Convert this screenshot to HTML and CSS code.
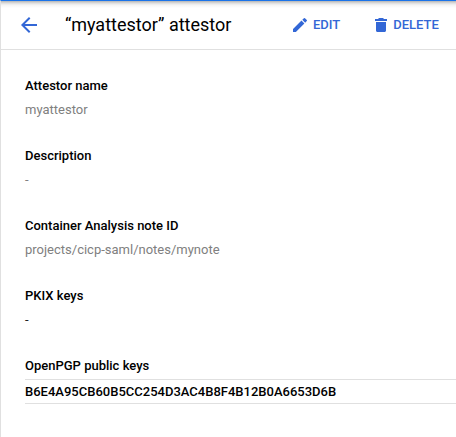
FILE: index.html
```html
<!DOCTYPE html>
<html lang="en">
<head>
<meta charset="utf-8">
<title>“myattestor” attestor</title>
<link rel="stylesheet" href="styles.css">
</head>
<body>
<header class="toolbar">
  <svg class="back" viewBox="0 0 24 24"><path d="M20 11H7.83l5.59-5.59L12 4l-8 8 8 8 1.41-1.41L7.83 13H20v-2z"/></svg>
  <h1 class="title">“myattestor” attestor</h1>
  <button class="action edit"><svg viewBox="0 0 18 18"><path d="M2 13.120V16h2.880l8.500-8.500-2.880-2.880L2 13.120zM15.780 5.100a.77.77 0 0 0 0-1.080l-1.800-1.800a.77.77 0 0 0-1.080 0l-1.600 1.600 2.880 2.880 1.600-1.600z"/></svg>EDIT</button>
  <button class="action"><svg viewBox="0 0 18 18"><path d="M4 14.500c0 .83.67 1.500 1.500 1.500h7c.83 0 1.500-.67 1.500-1.500V6H4v8.500zM15 3h-3l-1-1H7L6 3H3v2h12V3z"/></svg>DELETE</button>
</header>
<main class="details">
  <section class="field"><h2>Attestor name</h2><p>myattestor</p></section>
  <section class="field"><h2>Description</h2><p>-</p></section>
  <section class="field"><h2>Container Analysis note ID</h2><p>projects/cicp-saml/notes/mynote</p></section>
  <section class="field"><h2>PKIX keys</h2><p class="dark">-</p></section>
  <section class="field keys"><h2>OpenPGP public keys</h2><div class="key">B6E4A95CB60B5CC254D3AC4B8F4B12B0A6653D6B</div></section>
</main>
</body>
</html>
```
FILE: styles.css
```css
* { box-sizing: border-box; }
body {
  margin: 0;
  height: 437px;
  overflow: hidden;
  border-top: 1px solid #1a73e8;
  border-left: 1px solid #e0e0e0;
  background: #fff;
  color: #212121;
  font: 13px/20px Roboto, sans-serif;
}
.toolbar {
  display: flex;
  align-items: center;
  height: 49px;
  padding-left: 16px;
  border-bottom: 1px solid #e0e0e0;
  background: linear-gradient(#b4b4b4, #dcdcdc 2px, #f4f4f4 4px, #fff 7px);
}
svg { display: block; flex: none; fill: #3367d6; }
.back { width: 24px; height: 24px; }
.title { width: 226px; margin: 0 0 0 24px; font-size: 18px; font-weight: 400; color: #000; white-space: nowrap; }
.action { display: flex; align-items: center; padding: 0; border: 0; background: none; color: #3367d6; font: 500 13px/20px Roboto, sans-serif; }
.action svg { width: 18px; height: 18px; margin-right: 3px; }
.edit { margin-right: 32px; }
.edit svg { margin-right: 4px; }
.details { padding: 26px 0 0 24px; }
.field { height: 70px; }
h2 { margin: 0 0 4px; font-size: 13px; line-height: 20px; font-weight: 500; color: #000; }
p { margin: 0; color: #808080; }
.dark { color: #212121; }
.keys h2 { margin-bottom: 3px; }
.key { height: 25px; border: solid #e0e0e0; border-width: 1px 0; font-weight: 500; line-height: 23px; color: #000; }
```
